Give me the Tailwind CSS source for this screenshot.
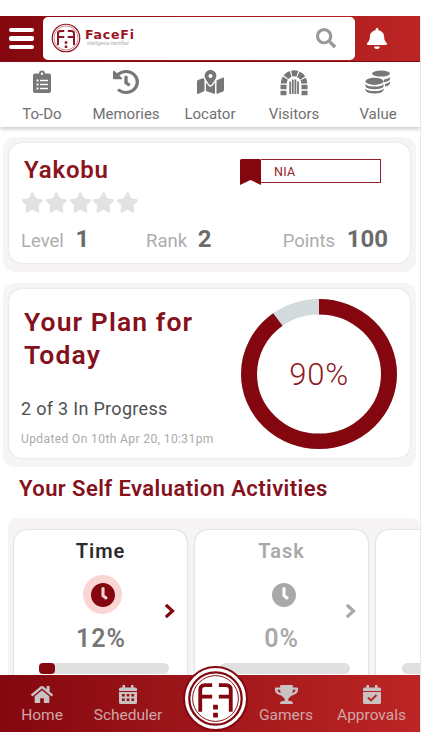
<!DOCTYPE html>
<html lang="en">
<head>
	<meta charset="utf-8">
	<title>FaceFi</title>
	<script src="https://cdn.jsdelivr.net/npm/@tailwindcss/browser@4"></script>
</head>
<body class="bg-white pt-4 h-[750px] overflow-hidden font-[Roboto,sans-serif]">
	<svg class="hidden">
		<symbol id="face" viewBox="0 0 64 64">
			<circle cx="32" cy="32" r="27.500" fill="none" stroke="currentColor" stroke-width="2.400"/>
			<circle cx="32" cy="32" r="24" fill="none" stroke="currentColor" stroke-width="1"/>
			<g fill="none" stroke="currentColor" stroke-width="4">
				<path d="M16 46V23q0-5 5-5H28.500M16 30H28.500"/>
				<path d="M48 46V23q0-5-5-5H35.500M48 30H35.500"/>
			</g>
			<path fill="currentColor" d="M29.500 38.500h5v5h-5zM29.500 47h5v5h-5z"/>
		</symbol>
		<symbol id="star" viewBox="0 0 576 512"><path d="M259.3 17.8L194 150.2 47.9 171.5c-26.2 3.8-36.7 36.1-17.7 54.6l105.7 103-25 145.5c-4.5 26.3 23.2 46 46.4 33.7L288 439.6l130.7 68.7c23.2 12.2 50.9-7.4 46.4-33.7l-25-145.5 105.7-103c19-18.5 8.5-50.8-17.7-54.6L382 150.2 316.7 17.8c-11.7-23.6-45.6-23.9-57.4 0z"/></symbol>
		<symbol id="clock" viewBox="8 8 496 496"><path d="M256,8C119,8,8,119,8,256S119,504,256,504,504,393,504,256,393,8,256,8Zm92.490,313h0l-20,25a16,16,0,0,1-22.490,2.500h0l-67-49.720a40,40,0,0,1-15-31.230V112a16,16,0,0,1,16-16h32a16,16,0,0,1,16,16V256l58,42.500A16,16,0,0,1,348.490,321Z"/></symbol>
		<symbol id="chevron" viewBox="0 0 10 14"><path d="M2 2l5.500 5L2 12" fill="none" stroke="currentColor" stroke-width="3.200" stroke-linecap="square"/></symbol>
	</svg>

	<div class="w-[421px] h-[717px] border-r border-[#e9e9e9] flex flex-col overflow-hidden">
		<!-- top bar -->
		<header class="shrink-0 h-[46px] flex items-center bg-linear-to-r from-[#84070f] to-[#bd2525] border-b border-[#8a0a14]">
			<button class="w-[43px] pl-[9px] flex flex-col gap-1">
				<span class="block w-[25px] h-[4.500px] rounded-xs bg-white"></span>
				<span class="block w-[25px] h-[4.500px] rounded-xs bg-white"></span>
				<span class="block w-[25px] h-[4.500px] rounded-xs bg-white"></span>
			</button>
			<div class="w-[312px] h-[43px] bg-white rounded-[5px] flex items-center pl-[7px]">
				<svg class="w-8 h-8 -mt-0.5 text-[#8f1620]"><use href="#face"/></svg>
				<div class="ml-[3px] -mt-1">
					<p class="font-[DejaVu_Sans,sans-serif] font-bold text-[12.500px] leading-[13px] tracking-[.8px] text-[#9a1722]">FaceFi</p>
					<p class="text-[4.500px] leading-[5px] pl-0.5 italic text-[#aaa]">Intelligence Identified</p>
				</div>
				<svg class="w-[20px] h-[20px] ml-auto mr-[19px] -mt-0.5 fill-[#999]" viewBox="0 0 512 512"><path d="M505 442.700L405.300 343c-4.500-4.500-10.600-7-17-7H372c27.600-35.300 44-79.700 44-128C416 93.100 322.900 0 208 0S0 93.100 0 208s93.100 208 208 208c48.300 0 92.700-16.400 128-44v16.300c0 6.400 2.500 12.500 7 17l99.700 99.700c9.400 9.400 24.600 9.400 33.900 0l28.300-28.300c9.400-9.400 9.400-24.600.1-34zM208 336c-70.700 0-128-57.200-128-128 0-70.700 57.200-128 128-128 70.700 0 128 57.200 128 128 0 70.700-57.200 128-128 128z"/></svg>
			</div>
			<svg class="w-[20px] h-[21px] ml-[12px] fill-white" viewBox="0 0 448 512" preserveAspectRatio="none"><path d="M224 512c35.320 0 63.970-28.650 63.970-64H160.030c0 35.350 28.650 64 63.970 64zm215.390-149.710c-19.320-20.760-55.470-51.990-55.470-154.290 0-77.700-54.480-139.900-127.940-155.160V32c0-17.670-14.320-32-31.980-32s-31.980 14.330-31.980 32v20.840C118.560 68.100 64.080 130.300 64.080 208c0 102.300-36.150 133.530-55.470 154.290-6 6.450-8.660 14.160-8.610 21.710.110 16.400 12.980 32 32.100 32h383.800c19.120 0 32-15.600 32.100-32 .050-7.550-2.610-15.270-8.610-21.710z"/></svg>
		</header>

		<nav class="shrink-0 h-[65px] grid grid-cols-5 text-[15px] leading-5 text-[#707070] shadow-[0_2px_4px_rgba(0,0,0,.22)]">
			<a class="flex flex-col items-center pt-2">
				<svg class="w-[18px] h-6 fill-[#777]" viewBox="0 0 18 24">
					<path fill-rule="evenodd" d="M2 3.500h4a3 3 0 0 1 6 0h4a2 2 0 0 1 2 2V21a2 2 0 0 1-2 2H2a2 2 0 0 1-2-2V5.500a2 2 0 0 1 2-2zM9 2.500a1.200 1.200 0 1 0 0 2.400a1.200 1.200 0 0 0 0-2.400zM3.500 9.500v2h2v-2zM7 9.800v1.400h8V9.800zM3.500 13.500v2h2v-2zM7 13.800v1.400h8v-1.400zM3.500 17.500v2h2v-2zM7 17.800v1.400h8v-1.400z"/>
				</svg>
				<span class="mt-[10px]">To-Do</span>
			</a>
			<a class="flex flex-col items-center pt-2">
				<svg class="w-[26px] h-6 fill-[#777]" viewBox="8 8 496 496" preserveAspectRatio="none"><path d="M504 255.531c.253 136.640-111.180 248.372-247.820 248.468-59.015.042-113.223-20.530-155.822-54.911-11.077-8.940-11.905-25.541-1.839-35.607l11.267-11.267c8.609-8.609 22.353-9.551 31.891-1.984C173.062 425.135 212.781 440 256 440c101.705 0 184-82.311 184-184 0-101.705-82.311-184-184-184-48.814 0-93.149 18.969-126.068 49.932l50.754 50.754c10.080 10.080 2.941 27.314-11.313 27.314H24c-8.837 0-16-7.163-16-16V38.627c0-14.254 17.234-21.393 27.314-11.314l49.372 49.372C129.209 34.136 189.552 8 256 8c136.810 0 247.747 110.780 248 247.531zm-180.912 78.784l9.823-12.630c8.138-10.463 6.253-25.542-4.210-33.679L288 256.349V152c0-13.255-10.745-24-24-24h-16c-13.255 0-24 10.745-24 24v135.651l65.409 50.874c10.463 8.137 25.541 6.253 33.679-4.210z"/></svg>
				<span class="mt-[10px]">Memories</span>
			</a>
			<a class="flex flex-col items-center pt-2">
				<svg class="w-[27px] h-6 fill-[#777]" viewBox="0 0 576 512"><path d="M288 0c-69.590 0-126 56.410-126 126 0 56.260 82.350 158.800 113.900 196.020 6.390 7.540 17.820 7.540 24.200 0C331.650 284.800 414 182.260 414 126 414 56.410 357.590 0 288 0zm0 168c-23.200 0-42-18.800-42-42s18.800-42 42-42 42 18.800 42 42-18.800 42-42 42zM20.120 215.950A32.006 32.006 0 0 0 0 245.660v250.320c0 11.320 11.430 19.060 21.940 14.860L160 448V214.920c-8.840-15.980-16.070-31.540-21.250-46.420L20.120 215.950zM288 359.670c-14.070 0-27.380-6.180-36.510-16.960-19.660-23.200-40.570-49.620-59.490-76.720v182l192 64V266c-18.920 27.090-39.820 53.520-59.490 76.720-9.130 10.770-22.440 16.950-36.510 16.950zm266.060-198.510L416 224v288l139.880-55.950A31.996 31.996 0 0 0 576 426.340V176.020c0-11.320-11.430-19.060-21.940-14.860z"/></svg>
				<span class="mt-[10px]">Locator</span>
			</a>
			<a class="flex flex-col items-center pt-2">
				<svg class="w-[28px] h-[26px] -mb-0.5" viewBox="0 0 28 26" fill="none" stroke="#777">
					<path stroke-width="6" stroke-dasharray="5.700 1.100" d="M3.800 13.500A10.200 10.200 0 0 1 24.200 13.500"/>
					<path fill="#777" stroke="none" d="M.5 14.800h6v4.400h-6zM.5 20.800h6v4.400h-6zM21.500 14.800h6v4.400h-6zM21.500 20.800h6v4.400h-6z"/>
					<path stroke-width="1.800" d="M10.200 11.500V24M12.800 9.500V24M15.400 9.500V24M18 11.500V24"/>
				</svg>
				<span class="mt-[10px]">Visitors</span>
			</a>
			<a class="flex flex-col items-center pt-2">
				<svg class="w-[26px] h-6 fill-[#777]" viewBox="0 0 26 24">
					<ellipse cx="16" cy="3.600" rx="9" ry="3"/>
					<path d="M19 9.600q5-.7 6-2.800v2.400q-1 2.400-6 3zM20 14q4-.8 5-2.500v2.300q-1 2.200-5 2.800z"/>
					<ellipse cx="9.500" cy="11.300" rx="9" ry="3.600"/>
					<path d="M.5 14q2 2.600 9 2.600t9-2.600v2.600q-1.500 2.700-9 2.700T.5 16.600zM.5 18.500q2 2.600 9 2.600t9-2.600v2q-1.500 2.900-9 2.900T.5 20.500z"/>
				</svg>
				<span class="mt-[10px]">Value</span>
			</a>
		</nav>

		<!-- profile -->
		<section class="shrink-0 mt-[10px] ml-[3px] w-[413px] h-[135px] pt-[6px] px-[6px] rounded-xl bg-[#f6f4f5]">
			<div class="h-[120px] rounded-[13px] bg-white shadow-[0_0_2px_rgba(0,0,0,.15)] pl-3 pr-[22px]">
				<div class="flex justify-between">
					<h2 class="pl-[3px] pt-[11px] text-[24px] leading-8 font-semibold tracking-[.8px] text-[#8a1520]">Yakobu</h2>
					<div class="flex mt-4 mr-[7px]">
						<svg class="w-[21px] h-[26px] fill-[#84070f]" viewBox="0 0 20 26" preserveAspectRatio="none"><path d="M0 1.500Q0 0 1.500 0h17Q20 0 20 1.500V26L10 21 0 26z"/></svg>
						<span class="w-[120px] h-6 border border-l-0 border-[#93222c] pl-[13px] text-[12.500px] leading-[23px] tracking-[.3px] text-[#93222c]">NIA</span>
					</div>
				</div>
				<div class="flex gap-px mt-[6px] fill-[#e2e2e2]">
					<svg class="w-[22.800px] h-[21px]"><use href="#star"/></svg>
					<svg class="w-[22.800px] h-[21px]"><use href="#star"/></svg>
					<svg class="w-[22.800px] h-[21px]"><use href="#star"/></svg>
					<svg class="w-[22.800px] h-[21px]"><use href="#star"/></svg>
					<svg class="w-[22.800px] h-[21px]"><use href="#star"/></svg>
				</div>
				<div class="flex mt-[10px] text-[18.500px] leading-8 text-[#adadad]">
					<p class="w-[125px]">Level <b class="pl-[7px] text-[24px] text-[#6b6b6b]">1</b></p>
					<p>Rank <b class="pl-[6px] text-[24px] text-[#6b6b6b]">2</b></p>
					<p class="ml-auto">Points <b class="pl-[7px] text-[24px] text-[#6b6b6b]">100</b></p>
				</div>
			</div>
		</section>

		<!-- plan -->
		<section class="shrink-0 mt-[11px] ml-[3px] w-[413px] h-[184px] pt-[6px] px-[6px] rounded-xl bg-[#f6f4f5]">
			<div class="h-[169px] rounded-[13px] bg-white shadow-[0_0_2px_rgba(0,0,0,.15)] pl-3 pr-[13px] flex justify-between">
				<div class="pt-4">
					<h2 class="pl-[3px] text-[26.500px] leading-[33px] font-semibold tracking-[1.100px] text-[#84111b]">Your Plan for<br>Today</h2>
					<p class="mt-[24px] text-[18px] leading-7 tracking-[.3px] text-[#4f4f4f]">2 of 3 In Progress</p>
					<p class="mt-[6px] text-[12px] leading-5 tracking-[.4px] text-[#aaa]">Updated On 10th Apr 20, 10:31pm</p>
				</div>
				<div class="mt-[10px] w-[156px] h-[150px] grid place-items-center">
					<svg class="col-start-1 row-start-1 w-[156px] h-[150px]" viewBox="0 0 156 156" preserveAspectRatio="none" fill="none" stroke-width="16">
						<circle cx="78" cy="78" r="70" stroke="#d2dade"/>
						<circle cx="78" cy="78" r="70" stroke="#84070f" pathLength="100" stroke-dasharray="90 10" transform="rotate(-90 78 78)"/>
					</svg>
					<span class="col-start-1 row-start-1 mt-0.5 text-[31px] font-light tracking-[.8px] text-[#8f1a24]">90%</span>
				</div>
			</div>
		</section>

		<h2 class="shrink-0 mt-[7px] pl-[19px] text-[22px] leading-[30px] font-semibold tracking-[.430px] text-[#84111b]">Your Self Evaluation Activities</h2>

		<!-- activities -->
		<section class="shrink-0 mt-[14px] ml-2 w-[412px] h-[157px] pt-3 pl-[6px] flex gap-2 rounded-t-lg bg-[#f6f4f5] overflow-hidden">
			<article class="shrink-0 w-[173px] h-[170px] rounded-[13px] bg-white shadow-[0_0_2px_rgba(0,0,0,.25)] relative flex flex-col items-center">
				<h3 class="mt-1.5 text-[20px] leading-[30px] font-semibold tracking-[1px] text-[#2b2b2b]">Time</h3>
				<span class="mt-[9px] ml-1 w-[39px] h-[39px] rounded-full bg-[#fbd5d4] grid place-items-center"><svg class="w-6 h-6 fill-[#84070f]"><use href="#clock"/></svg></span>
				<span class="mt-[9px] ml-px text-[25px] leading-8 font-semibold tracking-[1px] text-[#777]">12%</span>
				<svg class="absolute right-[12px] top-[74px] w-[10px] h-[14px] text-[#84070f]"><use href="#chevron"/></svg>
				<div class="mt-2 ml-[7px] w-[130px] h-[11px] rounded-md bg-[#e0e0e0]"><div class="h-full rounded-sm bg-[#84070f]" style="width:12%"></div></div>
			</article>
			<article class="shrink-0 w-[173px] h-[170px] rounded-[13px] bg-white shadow-[0_0_2px_rgba(0,0,0,.25)] relative flex flex-col items-center text-[#a9a9a9]">
				<h3 class="mt-1.5 text-[20px] leading-[30px] font-semibold tracking-[1px]">Task</h3>
				<span class="mt-[9px] ml-1 w-[39px] h-[39px] rounded-full grid place-items-center"><svg class="w-6 h-6 fill-[#a9a9a9]"><use href="#clock"/></svg></span>
				<span class="mt-[9px] text-[25px] leading-8 font-semibold tracking-[1px]">0%</span>
				<svg class="absolute right-[12px] top-[74px] w-[10px] h-[14px]"><use href="#chevron"/></svg>
				<div class="mt-2 ml-[7px] w-[130px] h-[11px] rounded-md bg-[#e0e0e0]"></div>
			</article>
			<article class="shrink-0 w-[173px] h-[170px] rounded-[13px] bg-white shadow-[0_0_2px_rgba(0,0,0,.25)] pt-[133px] pl-[26px]">
				<div class="w-[130px] h-[11px] rounded-md bg-[#e0e0e0]"></div>
			</article>
		</section>

		<!-- tab bar -->
		<footer class="shrink-0 relative w-[420px] h-[57px] flex text-[15.500px] leading-5 text-[#d0a6a8] bg-linear-to-r from-[#84070f] to-[#bd2525]">
			<a class="w-[84px] flex flex-col items-center pt-[10px]">
				<svg class="w-[22px] h-[19px] fill-[#c8c2c2]" viewBox="0 32 576 448"><path d="M280.370 148.260L96 300.110V464a16 16 0 0 0 16 16l112.060-.290a16 16 0 0 0 15.920-16V368a16 16 0 0 1 16-16h64a16 16 0 0 1 16 16v95.640a16 16 0 0 0 16 16.050L464 480a16 16 0 0 0 16-16V300L295.670 148.260a12.190 12.190 0 0 0-15.300 0zM571.600 251.470L488 182.560V44.050a12 12 0 0 0-12-12h-56a12 12 0 0 0-12 12v72.610L318.470 43a48 48 0 0 0-61 0L4.340 251.470a12 12 0 0 0-1.600 16.900l25.500 31A12 12 0 0 0 45.150 301l235.220-193.740a12.190 12.190 0 0 1 15.300 0L530.900 301a12 12 0 0 0 16.900-1.600l25.500-31a12 12 0 0 0-1.700-16.930z"/></svg>
				<span class="mt-px">Home</span>
			</a>
			<a class="w-[88px] flex flex-col items-center pt-[10px]">
				<svg class="w-[18px] h-[19px] fill-[#c8c2c2]" viewBox="0 0 18 19"><path fill-rule="evenodd" d="M3.500 0H6v2.500h6V0h2.500v2.500H16.500A1.500 1.500 0 0 1 18 4v2H0V4a1.500 1.500 0 0 1 1.500-1.500h2zM0 7h18v10.500a1.500 1.500 0 0 1-1.500 1.500h-15A1.500 1.500 0 0 1 0 17.500zM3 9v2.500h2.700V9zM7.700 9v2.500h2.700V9zM12.400 9v2.500h2.700V9zM3 13.500V16h2.700v-2.500zM7.700 13.500V16h2.700v-2.500zM12.400 13.500V16h2.700v-2.500z"/></svg>
				<span class="mt-px">Scheduler</span>
			</a>
			<a class="ml-[86px] w-[56px] flex flex-col items-center pt-[10px]">
				<svg class="w-[23px] h-[19px] fill-[#c8c2c2]" viewBox="0 0 576 512" preserveAspectRatio="none"><path d="M552 64H448V24c0-13.300-10.700-24-24-24H152c-13.300 0-24 10.700-24 24v40H24C10.700 64 0 74.700 0 88v56c0 35.700 22.500 72.400 61.900 100.700 31.500 22.700 69.800 37.100 110 41.700C203.300 338.500 240 360 240 360v72h-48c-35.300 0-64 20.700-64 56v12c0 6.600 5.400 12 12 12h296c6.600 0 12-5.400 12-12v-12c0-35.300-28.700-56-64-56h-48v-72s36.700-21.500 68.100-73.600c40.300-4.600 78.600-19 110-41.700 39.300-28.300 61.900-65 61.900-100.700V88c0-13.300-10.700-24-24-24zM99.300 192.800C74.900 175.200 64 155.600 64 144v-16h64.200c1 32.600 5.800 61.200 12.800 86.200-15.100-5.200-29.200-12.400-41.700-21.400zM512 144c0 16.100-17.700 36.100-35.300 48.800-12.500 9-26.700 16.200-41.800 21.400 7-25 11.800-53.600 12.800-86.200H512v16z"/></svg>
				<span class="mt-px">Gamers</span>
			</a>
			<a class="w-[106px] pl-[9px] flex flex-col items-center pt-[10px]">
				<svg class="w-[18px] h-[19px] fill-[#c8c2c2]" viewBox="0 0 18 19"><path d="M3.500 0H6v2.500h6V0h2.500v2.500H16.500A1.500 1.500 0 0 1 18 4v2H0V4a1.500 1.500 0 0 1 1.500-1.500h2zM0 7h18v10.500a1.500 1.500 0 0 1-1.500 1.500h-15A1.500 1.500 0 0 1 0 17.500z"/><path d="M5 12.500l3 3 5.500-5.500" fill="none" stroke="#b52024" stroke-width="1.900"/></svg>
				<span class="mt-px">Approvals</span>
			</a>
			<span class="absolute left-[183px] -top-[9px] w-[65px] h-[65px] rounded-full bg-white border-2 border-[#84070f] text-[#84070f]"><svg class="w-full h-full"><use href="#face"/></svg></span>
		</footer>
	</div>
</body>
</html>
